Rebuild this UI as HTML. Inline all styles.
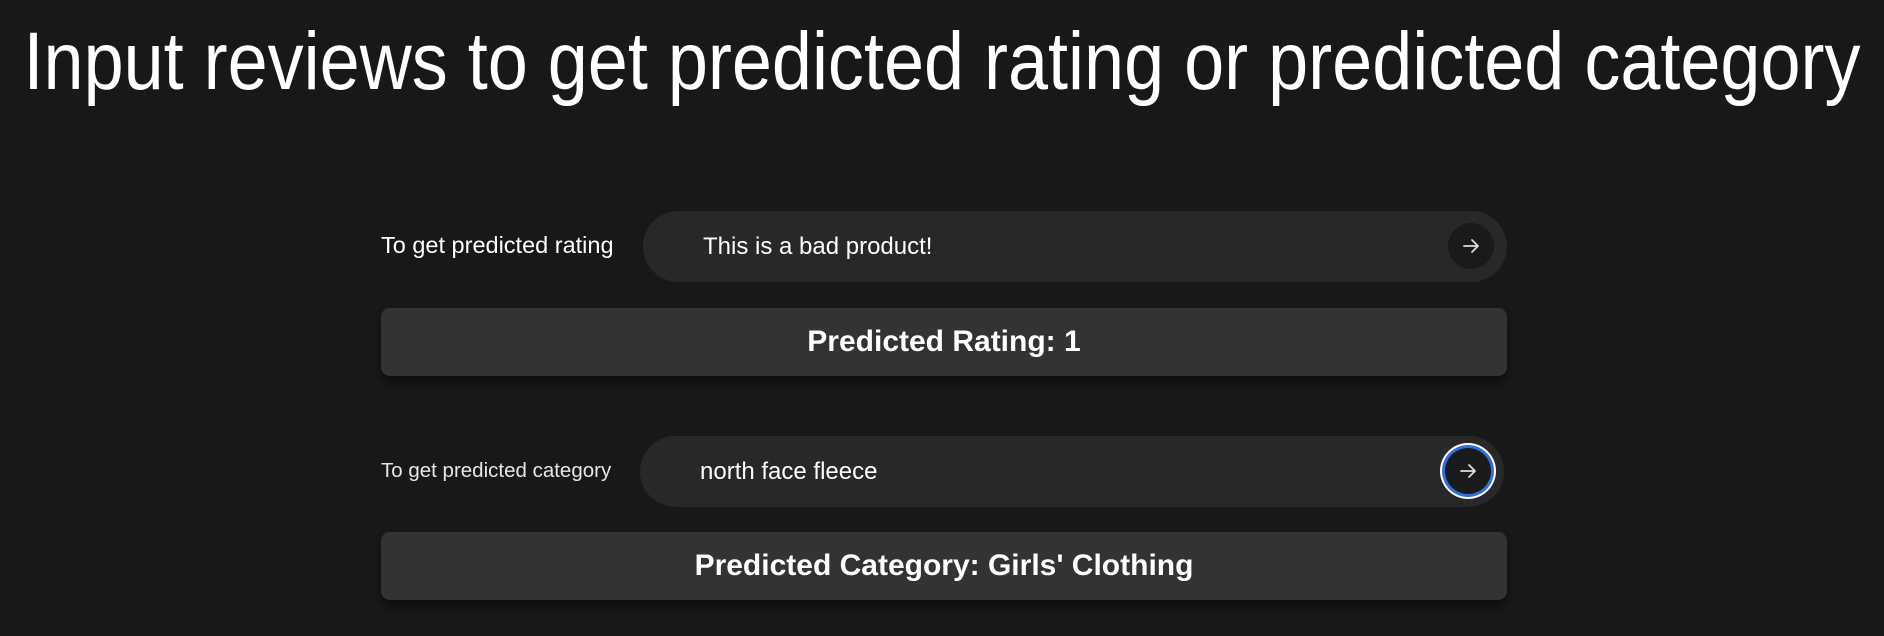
<!DOCTYPE html>
<html><head><style>
html,body{margin:0;padding:0;background:#181818;width:1884px;height:636px;overflow:hidden;font-family:"Liberation Sans",Arial,sans-serif;color:#fff}
h1{position:absolute;left:50%;top:14px;margin:0;font-weight:400;font-size:82px;line-height:96px;white-space:nowrap;transform:translateX(-50%) scaleX(0.878);transform-origin:50% 0}
.lbl{position:absolute;left:381px;white-space:nowrap}
.pill{position:absolute;background:#28282b;border-radius:36px;height:71px}
.pill span{position:absolute;top:0;line-height:71px;font-size:24px}
.btn{position:absolute;width:46px;height:46px;border-radius:50%;background:#1a1a1c;top:12px}
.btn svg{position:absolute;left:13px;top:13px}
.res{position:absolute;left:381px;width:1126px;height:68px;background:#333334;border-radius:9px;box-shadow:0 6px 8px rgba(0,0,0,.45);text-align:center;line-height:68px;font-weight:700;font-size:30px}
</style></head><body>
<h1>Input reviews to get predicted rating or predicted category</h1>
<div class="lbl" style="top:232px;font-size:23.5px">To get predicted rating</div>
<div class="pill" style="left:643px;width:864px;top:211px"><span style="left:60px">This is a bad product!</span>
<div class="btn" style="left:805px"><svg width="20" height="20" viewBox="0 0 20 20"><path d="M3 10H17M11 4L17 10L11 16" stroke="#ddd" stroke-width="1.8" fill="none" stroke-linecap="round" stroke-linejoin="round"/></svg></div></div>
<div class="res" style="top:308px">Predicted Rating: 1</div>
<div class="lbl" style="top:459px;font-size:20.5px;color:#e6e6e6">To get predicted category</div>
<div class="pill" style="left:640px;width:864px;top:436px"><span style="left:60px">north face fleece</span>
<div class="btn" style="left:805px;box-shadow:0 0 0 3px #2f6fdc,0 0 0 5px #fff"><svg width="20" height="20" viewBox="0 0 20 20"><path d="M3 10H17M11 4L17 10L11 16" stroke="#ddd" stroke-width="1.8" fill="none" stroke-linecap="round" stroke-linejoin="round"/></svg></div></div>
<div class="res" style="top:532px">Predicted Category: Girls' Clothing</div>
</body></html>
